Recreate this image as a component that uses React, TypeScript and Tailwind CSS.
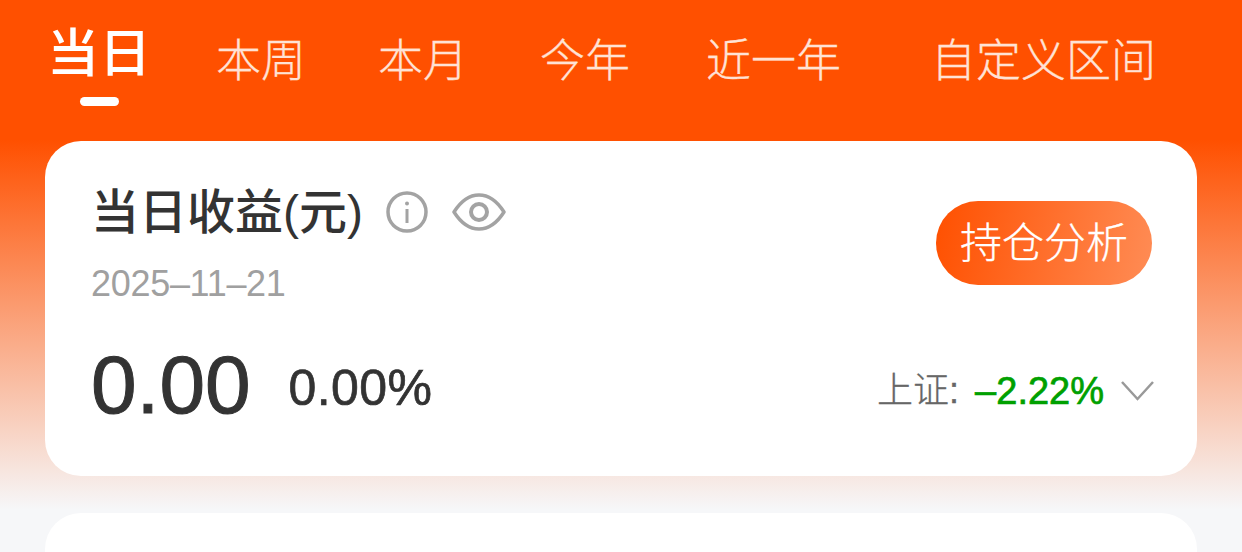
export default function App() {
  const sans = "font-['Liberation_Sans','Noto_Sans_CJK_SC',sans-serif]";
  return (
    <div className={`${sans} h-[552px] w-[1242px] overflow-hidden bg-[linear-gradient(180deg,#ff5000_0,#ff5000_140px,#f6f7f9_510px,#f6f7f9_100%)]`}>
      <nav className="flex h-[141px] items-start text-[45px] leading-[60px] font-light text-[#ffe2d5] [-webkit-text-stroke:0.3px_#ffe2d5]">
        <div className="ml-[47px] mt-[24px] flex w-[104px] flex-col items-center">
          <span className="text-[52px] font-medium leading-[60px] text-white [-webkit-text-stroke:0]">当日</span>
          <span className="mt-[13px] h-[9px] w-[39px] rounded-full bg-white" />
        </div>
        <span className="ml-[65px] mt-[32px]">本周</span>
        <span className="ml-[72px] mt-[32px]">本月</span>
        <span className="ml-[72px] mt-[32px]">今年</span>
        <span className="ml-[76px] mt-[32px]">近一年</span>
        <span className="ml-[90px] mt-[32px]">自定义区间</span>
      </nav>
      <section className="mx-[45px] flex h-[335px] flex-col rounded-[36px] bg-white pl-[46px] pr-[45px]">
        <div className="mt-[40px] flex items-start justify-between">
          <div>
            <div className="flex items-center">
              <h2 className="mt-[2px] text-[48px] leading-[60px] font-medium text-[#333]">当日收益(元)</h2>
              <svg className="ml-[23px]" width="42" height="42" viewBox="0 0 42 42" fill="none" stroke="#a3a3a3" strokeWidth="3.5">
                <circle cx="21" cy="21" r="19" />
                <circle cx="21" cy="12.5" r="2" fill="#a3a3a3" stroke="none" />
                <path d="M21 18v14" strokeWidth="3" />
              </svg>
              <svg className="ml-[24px]" width="54" height="42" viewBox="0 0 54 42" fill="none" stroke="#a3a3a3" strokeWidth="3.5">
                <path d="M2 21C9 10 17 4 27 4s18 6 25 17c-7 11-15 17-25 17S9 32 2 21Z" strokeLinejoin="round" />
                <circle cx="27" cy="21" r="8" strokeWidth="4" />
              </svg>
            </div>
            <p className="mt-[18px] text-[36px] leading-[46px] tracking-[-0.3px] font-light text-[#a0a0a0]">2025–11–21</p>
          </div>
          <button className="mt-[20px] flex h-[84px] w-[216px] items-center justify-center rounded-[42px] bg-[linear-gradient(100deg,#ff5000,#ff8c55)] text-[42px] font-light text-white [-webkit-text-stroke:0.3px_#fff]">持仓分析</button>
        </div>
        <div className="mt-[30px] flex items-center justify-between">
          <div className="flex items-center">
            <span className="text-[82px] leading-[96px] text-[#333] [-webkit-text-stroke:1px_#333]">0.00</span>
            <span className="ml-[38px] mt-[6px] text-[50px] leading-[60px] tracking-[0.4px] text-[#333] [-webkit-text-stroke:0.7px_#333]">0.00%</span>
          </div>
          <div className="mr-[-2px] mt-[12px] flex items-center text-[36px] leading-[46px]">
            <span className="font-light text-[#666] [-webkit-text-stroke:0.3px_#666]">上证:</span>
            <span className="ml-[16px] text-[38px] text-[#00a000] [-webkit-text-stroke:0.7px_#00a000]">–2.22%</span>
            <svg className="ml-[17px]" width="33" height="22" viewBox="0 0 33 22" fill="none" stroke="#999" strokeWidth="2.5">
              <path d="M1 2l15.500 17L32 2" />
            </svg>
          </div>
        </div>
      </section>
      <section className="mx-[45px] mt-[37px] h-[200px] rounded-[36px] bg-white" />
    </div>
  );
}
